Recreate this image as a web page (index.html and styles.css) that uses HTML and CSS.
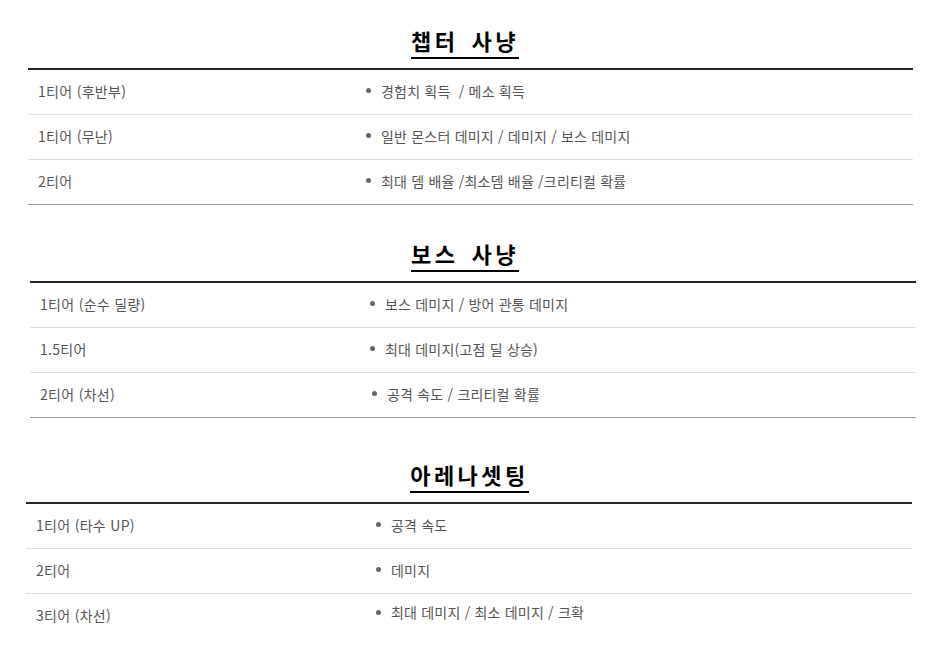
FILE: index.html
```html
<!DOCTYPE html>
<html lang="ko">
<head>
<meta charset="utf-8">
<title>사냥 세팅</title>
<link rel="stylesheet" href="styles.css">
</head>
<body>
<main class="page">
  <section class="block block-chapter">
    <h2 class="title"><span class="title-text">챕터 사냥</span></h2>
    <div class="table">
      <div class="row">
        <div class="cell-tier">1티어 (후반부)</div>
        <ul class="cell-list"><li>경험치 획득 &nbsp;/ 메소 획득</li></ul>
      </div>
      <div class="row">
        <div class="cell-tier">1티어 (무난)</div>
        <ul class="cell-list"><li>일반 몬스터 데미지 / 데미지 / 보스 데미지</li></ul>
      </div>
      <div class="row row-last">
        <div class="cell-tier">2티어</div>
        <ul class="cell-list"><li>최대 뎀 배율 /최소뎀 배율 /크리티컬 확률</li></ul>
      </div>
    </div>
  </section>

  <section class="block block-boss">
    <h2 class="title"><span class="title-text">보스 사냥</span></h2>
    <div class="table">
      <div class="row">
        <div class="cell-tier">1티어 (순수 딜량)</div>
        <ul class="cell-list"><li>보스 데미지 / 방어 관통 데미지</li></ul>
      </div>
      <div class="row">
        <div class="cell-tier">1.5티어</div>
        <ul class="cell-list"><li>최대 데미지(고점 딜 상승)</li></ul>
      </div>
      <div class="row row-last">
        <div class="cell-tier">2티어 (차선)</div>
        <ul class="cell-list cell-list-nudge"><li>공격 속도 / 크리티컬 확률</li></ul>
      </div>
    </div>
  </section>

  <section class="block block-arena">
    <h2 class="title"><span class="title-text">아레나셋팅</span></h2>
    <div class="table">
      <div class="row">
        <div class="cell-tier">1티어 (타수 UP)</div>
        <ul class="cell-list"><li>공격 속도</li></ul>
      </div>
      <div class="row">
        <div class="cell-tier">2티어</div>
        <ul class="cell-list"><li>데미지</li></ul>
      </div>
      <div class="row row-open">
        <div class="cell-tier">3티어 (차선)</div>
        <ul class="cell-list cell-list-high"><li>최대 데미지 / 최소 데미지 / 크확</li></ul>
      </div>
    </div>
  </section>
</main>
</body>
</html>
```

FILE: styles.css
```css
html, body {
  margin: 0;
  padding: 0;
  background: #ffffff;
}

body {
  font-family: "Noto Sans CJK KR", "Noto Sans", sans-serif;
  color: #555555;
  font-size: 14px;
}

.page {
  display: flex;
  flex-direction: column;
  padding-top: 25px;
}

.block {
  display: flex;
  flex-direction: column;
}

.block-chapter {
  margin-left: 28px;
  width: 885px;
}

.block-boss {
  margin-top: 33px;
  margin-left: 30px;
  width: 886px;
}

.block-arena {
  margin-top: 41px;
  margin-left: 26px;
  width: 886px;
}

.title {
  margin: 0 0 9px 0;
  text-align: center;
  font-size: 22px;
  font-weight: 700;
  line-height: 30px;
  color: #000000;
  letter-spacing: 3.5px;
}

.title-text {
  display: inline-block;
  padding-bottom: 2px;
  border-bottom: 2px solid #000000;
}

.block-chapter .title {
  padding-right: 11px;
  word-spacing: 3.5px;
}

.block-boss .title {
  padding-right: 16px;
  word-spacing: 3.5px;
}

.block-arena .title {
  padding-left: 1px;
}

.table {
  border-top: 2px solid #262626;
  display: flex;
  flex-direction: column;
}

.row {
  display: grid;
  grid-template-columns: 338px 1fr;
  align-items: center;
  box-sizing: border-box;
  height: 45px;
  padding-bottom: 3px;
  border-bottom: 1px solid #dddddd;
}

.block-boss .row {
  grid-template-columns: 340px 1fr;
}

.block-arena .row {
  grid-template-columns: 350px 1fr;
}

.row-last {
  border-bottom-color: #999999;
}

.row-open {
  border-bottom: none;
}

.cell-tier {
  padding-left: 10px;
  line-height: 20px;
  letter-spacing: 0.3px;
  white-space: nowrap;
}

.cell-list {
  list-style: none;
  margin: 0;
  padding: 0;
  line-height: 20px;
  letter-spacing: 0.2px;
}

.cell-list li {
  display: flex;
  align-items: center;
  gap: 10px;
  white-space: pre;
}

.cell-list li::before {
  content: "";
  flex: none;
  width: 5px;
  height: 5px;
  border-radius: 50%;
  background: #666666;
}

.cell-list-nudge {
  padding-left: 2px;
}

.cell-list-high {
  padding-bottom: 6px;
}
```
